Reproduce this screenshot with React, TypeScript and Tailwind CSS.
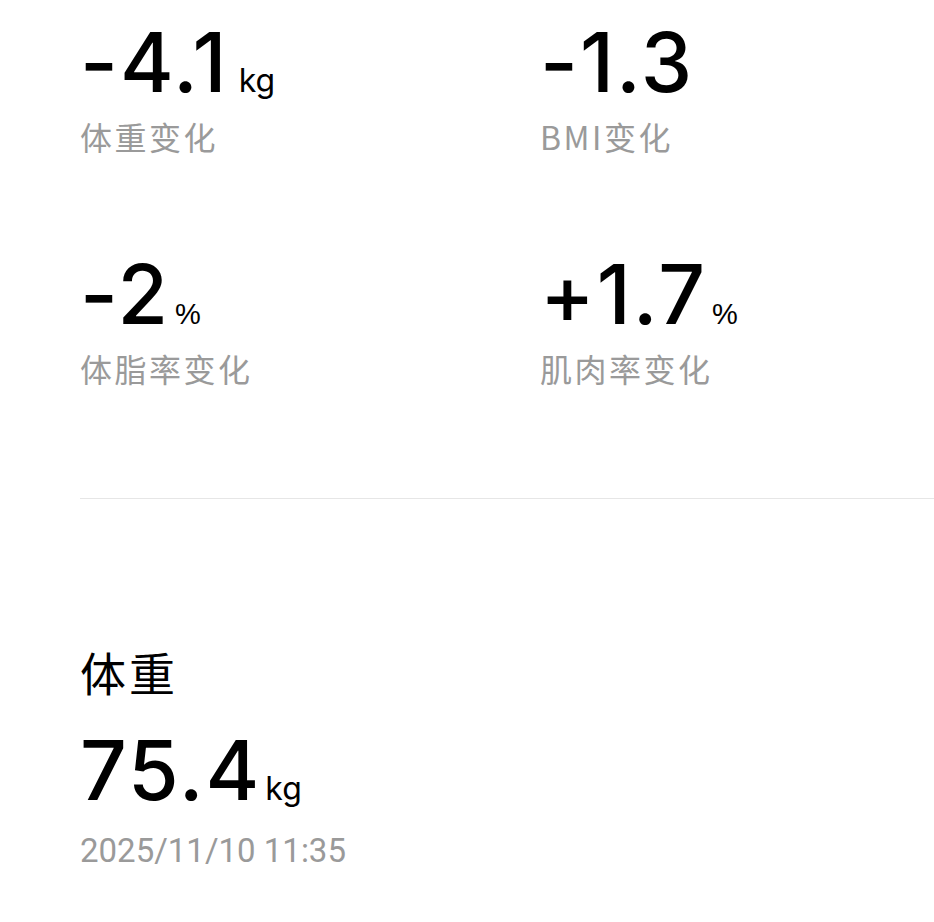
import React from "react";

const numFont = { fontFamily: "Inter, 'Noto Sans', sans-serif" };

function Stat({ value, unit, label }: { value: string; unit?: string; label: string }) {
  return (
    <div className="flex flex-col">
      <div className="flex items-baseline">
        <span className="text-[82px] leading-[82px] font-medium text-black tracking-[2px]" style={numFont}>
          {value}
        </span>
        {unit === "kg" && (
          <span className="ml-[10px] text-[32px] leading-none text-black" style={numFont}>
            kg
          </span>
        )}
        {unit === "%" && (
          <span className="ml-[5px] text-[29px] leading-none text-black font-['Liberation_Sans',sans-serif]">
            %
          </span>
        )}
      </div>
      <div className="mt-[16px] text-[32px] leading-[32px] tracking-[2.5px] text-[#9a9a9a] font-['Noto_Sans_CJK_SC',sans-serif]">
        {label}
      </div>
    </div>
  );
}

export default function App() {
  return (
    <div className="w-[934px] h-[922px] bg-white overflow-hidden pl-[80px]">
      <div className="grid grid-cols-[460px_1fr] pt-[22px]">
        <Stat value="-4.1" unit="kg" label="体重变化" />
        <Stat value="-1.3" label="BMI变化" />
      </div>
      <div className="grid grid-cols-[460px_1fr] mt-[102px]">
        <Stat value="-2" unit="%" label="体脂率变化" />
        <Stat value="+1.7" unit="%" label="肌肉率变化" />
      </div>
      <div className="mt-[114px] h-px bg-[#e6e6e6]" />
      <div className="mt-[149px] text-[46px] leading-[46px] tracking-[3px] text-black font-['Noto_Sans_CJK_SC',sans-serif]">
        体重
      </div>
      <div className="mt-[36px] flex items-baseline">
        <span className="text-[82px] leading-[82px] font-medium text-black tracking-[2px]" style={numFont}>
          75.4
        </span>
        <span className="ml-[4px] text-[32px] leading-none text-black" style={numFont}>
          kg
        </span>
      </div>
      <div className="mt-[22px] text-[33px] leading-[33px] text-[#9a9a9a] font-['Roboto',sans-serif]">
        2025/11/10 11:35
      </div>
    </div>
  );
}
